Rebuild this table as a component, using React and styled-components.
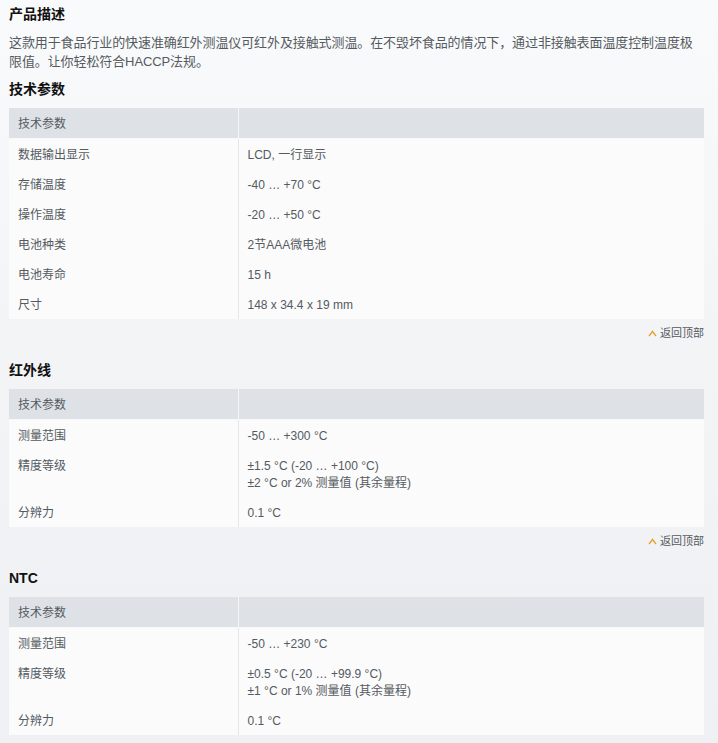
import React from "react";
import styled, { createGlobalStyle } from "styled-components";

const GlobalStyle = createGlobalStyle`
  html, body {
    margin: 0;
    padding: 0;
  }
  body {
    min-height: 743px;
    background: linear-gradient(180deg, #f9fafb 0%, #f3f4f6 45%, #eef0f3 100%);
    font-family: "Liberation Sans", "Noto Sans CJK SC", sans-serif;
  }
`;

const Page = styled.div`
  width: 695px;
  padding: 4px 14px 10px 9px;
`;

const Title = styled.h3`
  margin: 0;
  font-size: 14px;
  line-height: 20px;
  font-weight: bold;
  color: #111;
`;

const Description = styled.p`
  max-width: 694px;
  margin: 9px 0 8px;
  font-size: 13px;
  line-height: 19px;
  letter-spacing: -0.1px;
  color: #555a60;
`;

const Section = styled.section`
  & + & {
    margin-top: 19px;
  }
`;

const Table = styled.table`
  width: 695px;
  margin-top: 9px;
  border-collapse: collapse;
  table-layout: fixed;
  font-size: 12px;
  color: #555a5f;
`;

const HeadCell = styled.th`
  background: #dee2e6;
  font-weight: normal;
  text-align: left;
  padding: 8px 9px 5px;
  line-height: 17px;
  border-bottom: 1px solid #f7f8fa;
  border-right: ${(p) => (p.$first ? "1px solid #f5f6f8" : "none")};
  width: ${(p) => (p.$first ? "229px" : "auto")};
  box-sizing: border-box;
`;

const Cell = styled.td`
  background: #fbfbfc;
  vertical-align: top;
  padding: 8px 9px 5px;
  line-height: 17px;
  border-right: ${(p) => (p.$first ? "1px solid #e3e6ea" : "none")};
`;

const BackTop = styled.div`
  display: flex;
  justify-content: flex-end;
  align-items: center;
  gap: 3px;
  margin-top: 6px;
  font-size: 11px;
  line-height: 16px;
  color: #555a60;
`;

const Chevron = () => (
  <svg width="9" height="7" viewBox="0 0 9 7" aria-hidden="true">
    <path d="M1 6 L4.5 1.5 L8 6" fill="none" stroke="#e9a23b" strokeWidth="1.4" />
  </svg>
);

const SpecTable = ({ rows }) => (
  <Table>
    <thead>
      <tr>
        <HeadCell $first>技术参数</HeadCell>
        <HeadCell></HeadCell>
      </tr>
    </thead>
    <tbody>
      {rows.map(([k, v]) => (
        <tr key={k}>
          <Cell $first>{k}</Cell>
          <Cell>
            {Array.isArray(v)
              ? v.map((line, i) => (
                  <React.Fragment key={i}>
                    {i > 0 && <br />}
                    {line}
                  </React.Fragment>
                ))
              : v}
          </Cell>
        </tr>
      ))}
    </tbody>
  </Table>
);

const BackToTop = () => (
  <BackTop>
    <Chevron />
    <span>返回顶部</span>
  </BackTop>
);

export default function App() {
  return (
    <>
      <GlobalStyle />
      <Page>
        <Title>产品描述</Title>
        <Description>
          这款用于食品行业的快速准确红外测温仪可红外及接触式测温。在不毁坏食品的情况下，通过非接触表面温度控制温度极限值。让你轻松符合HACCP法规。
        </Description>
        <Section>
          <Title>技术参数</Title>
          <SpecTable
            rows={[
              ["数据输出显示", "LCD, 一行显示"],
              ["存储温度", "-40 … +70 °C"],
              ["操作温度", "-20 … +50 °C"],
              ["电池种类", "2节AAA微电池"],
              ["电池寿命", "15 h"],
              ["尺寸", "148 x 34.4 x 19 mm"],
            ]}
          />
          <BackToTop />
        </Section>
        <Section>
          <Title>红外线</Title>
          <SpecTable
            rows={[
              ["测量范围", "-50 … +300 °C"],
              ["精度等级", ["±1.5 °C (-20 … +100 °C)", "±2 °C or 2% 测量值 (其余量程)"]],
              ["分辨力", "0.1 °C"],
            ]}
          />
          <BackToTop />
        </Section>
        <Section>
          <Title>NTC</Title>
          <SpecTable
            rows={[
              ["测量范围", "-50 … +230 °C"],
              ["精度等级", ["±0.5 °C (-20 … +99.9 °C)", "±1 °C or 1% 测量值 (其余量程)"]],
              ["分辨力", "0.1 °C"],
            ]}
          />
        </Section>
      </Page>
    </>
  );
}
